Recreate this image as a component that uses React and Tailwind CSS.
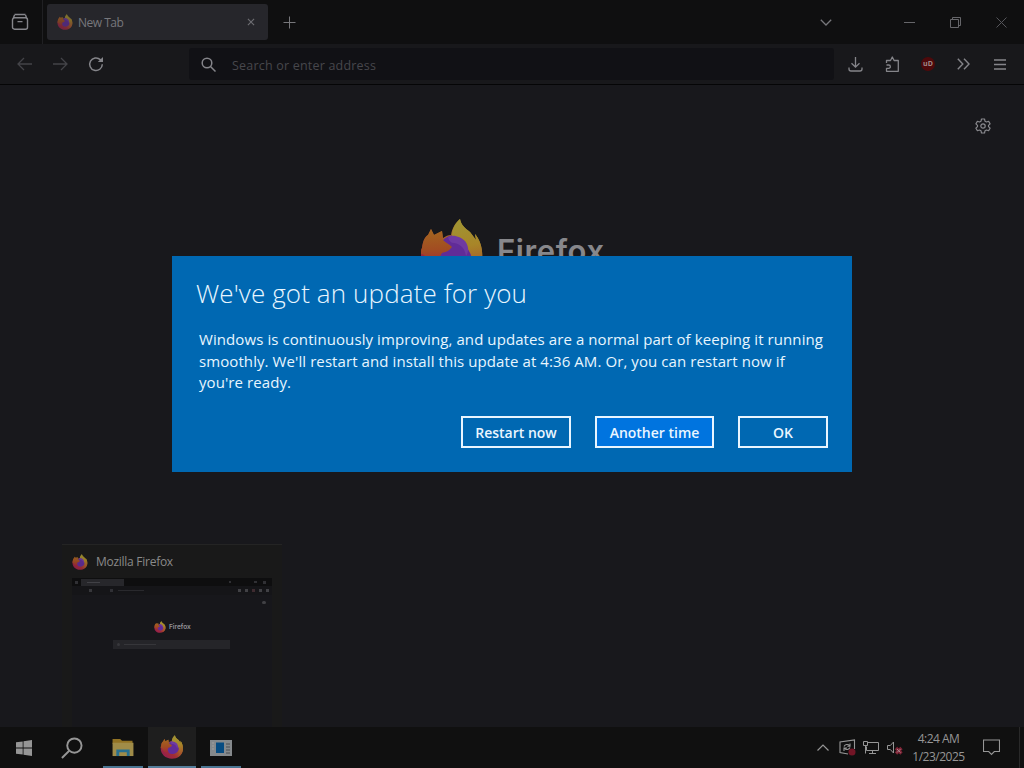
import React from "react";

function FirefoxIcon({ id, className }) {
  return (
    <svg viewBox="0 0 64 66" className={className} fill="none">
      <defs>
        <linearGradient id={`${id}-body`} x1="54" y1="8" x2="10" y2="60" gradientUnits="userSpaceOnUse">
          <stop offset="0" stopColor="#a08c2c" />
          <stop offset="0.4" stopColor="#a5602a" />
          <stop offset="0.7" stopColor="#a02c36" />
          <stop offset="1" stopColor="#951d4f" />
        </linearGradient>
        <linearGradient id={`${id}-flame`} x1="42" y1="0" x2="52" y2="56" gradientUnits="userSpaceOnUse">
          <stop offset="0" stopColor="#9f9634" />
          <stop offset="0.5" stopColor="#a88528" />
          <stop offset="1" stopColor="#a54c2c" />
        </linearGradient>
        <linearGradient id={`${id}-head`} x1="12" y1="14" x2="14" y2="50" gradientUnits="userSpaceOnUse">
          <stop offset="0" stopColor="#a3631f" />
          <stop offset="0.5" stopColor="#a24c22" />
          <stop offset="1" stopColor="#a0243c" />
        </linearGradient>
      </defs>
      <path
        d="M2 30C3 22 5 19 8 17l3-6 3 6 8-4 1 7c3-2 5-3 8-3C32 10 36 4 40 1c1 6 5 9 10 13l6 8-1-6c6 7 8 17 7 25C60 56 47 65 32 65 14 65 1 52 1 37c0-3 0-5 1-7Z"
        fill={`url(#${id}-body)`}
      />
      <path d="M22 24c3-6 11-8 18-6 9 3 14 14 10 23-3 8-11 12-19 11-9-1-16-8-15-17 0-5 2-8 6-11Z" fill="#612c98" />
      <path
        d="M40 1c1 6 5 9 10 13l6 8-1-6c6 7 8 17 7 25-1 8-7 15-14 19 5-7 6-16 3-23-3-7-6-10-10-15-3-3-6-3-9-4 0-8 4-13 8-17Z"
        fill={`url(#${id}-flame)`}
      />
      <path
        d="M2 30C3 22 5 19 8 17l3-6 3 6 8-4 1 9c3 3 6 4 9 7-3 4-6 5-10 6-3 4-2 10 2 13-8 3-17-2-19-10-2-2-3-2-4-2 0-3 0-5 1-6Z"
        fill={`url(#${id}-head)`}
      />
      <path d="M28 19c5-3 13 0 17 4 4 5 4 11 1 15-1-7-5-12-12-13-3 0-5-2-6-6Z" fill="#6f3aa2" />
    </svg>
  );
}

function TabStrip() {
  return (
    <div className="flex h-11 bg-[#0f0f10] text-[#85858a]">
      <div className="flex w-[43px] items-center justify-center border-r border-[#202023]">
        <svg className="ml-[-2px] h-[18px] w-[18px]" viewBox="0 0 18 18" fill="none" stroke="currentColor" strokeWidth="1.4">
          <path d="M3.5 1.5h11M3.5 4.8h11a2 2 0 0 1 2 2v7.400a2 2 0 0 1-2 2h-11a2 2 0 0 1-2-2V6.800a2 2 0 0 1 2-2ZM6.500 8.600h5M2 6l1.500-4M16 6l-1.500-4" />
        </svg>
      </div>
      <div className="mt-1 ml-[4px] flex h-9 w-[221px] items-center rounded-[3px] bg-[#26262b] pr-[13px] pl-[10px]">
        <FirefoxIcon id="tab" className="h-4 w-4 opacity-70" />
        <span className="mt-[2px] ml-[5px] flex-1 text-[12px] tracking-[-0.500px] text-[#77777c]">New Tab</span>
        <svg className="h-2 w-2" viewBox="0 0 9 9" stroke="#6f6f74" strokeWidth="1.200">
          <path d="m1 1 7 7M8 1 1 8" />
        </svg>
      </div>
      <svg className="mt-[16px] ml-[15px] h-[13px] w-[13px]" viewBox="0 0 13 13" stroke="#77777b">
        <path d="M6.500.5v12M.5 6.500h12" />
      </svg>
      <div className="mr-[17px] ml-auto flex items-center">
        <svg className="mr-[72px] h-[7px] w-3" viewBox="0 0 12 7" fill="none" stroke="#77777b" strokeWidth="1.300">
          <path d="m.8.8 5.200 5.200L11.200.8" />
        </svg>
        <svg className="mr-[35px] h-[11px] w-[11px]" viewBox="0 0 11 11" stroke="#66666a">
          <path d="M0 5.500h11" />
        </svg>
        <svg className="mr-[35px] h-[11px] w-[11px]" viewBox="0 0 11 11" fill="none" stroke="#66666a">
          <path d="M.5 2.500h8v8h-8zM2.500 2V.5h8v8H9" />
        </svg>
        <svg className="h-[11px] w-[11px]" viewBox="0 0 11 11" stroke="#55555a">
          <path d="m.5.5 10 10M10.500.5l-10 10" />
        </svg>
      </div>
    </div>
  );
}

function NavBar() {
  return (
    <div className="flex h-[41px] items-center border-b border-[#050506] bg-[#18181b] text-[#85858a]">
      <svg className="ml-[17px] h-[14px] w-[15px] text-[#434348]" viewBox="0 0 15 14" fill="none" stroke="currentColor" strokeWidth="1.300">
        <path d="M7 1 1 7l6 6M1 7h14" />
      </svg>
      <svg className="ml-[21px] h-[14px] w-[15px] text-[#434348]" viewBox="0 0 15 14" fill="none" stroke="currentColor" strokeWidth="1.300">
        <path d="m8 1 6 6-6 6M14 7H0" />
      </svg>
      <svg className="ml-[20px] h-4 w-4" viewBox="0 0 16 16" fill="none" stroke="currentColor" strokeWidth="1.500">
        <path d="M14.300 8.300A6.300 6.300 0 1 1 12.300 3.600l1.500 1.400" />
        <path d="M15 .9v5.200H9.800Z" fill="currentColor" stroke="none" />
      </svg>
      <div className="ml-[85px] flex h-8 w-[645px] items-center rounded-[3px] bg-[#111115] pl-3">
        <svg className="h-[15px] w-[15px]" viewBox="0 0 15 15" fill="none" stroke="currentColor" strokeWidth="1.500">
          <circle cx="6" cy="6" r="4.800" />
          <path d="m9.500 9.500 5 5" />
        </svg>
        <span className="mt-[4px] ml-[16px] text-[12.500px] tracking-[0.200px] text-[#47474c]">Search or enter address</span>
      </div>
      <svg className="ml-[14px] h-[15px] w-[15px]" viewBox="0 0 15 15" fill="none" stroke="currentColor" strokeWidth="1.300">
        <path d="M7.500 0v10M3.500 6.200l4 4 4-4M1 10.500V12a2 2 0 0 0 2 2h9a2 2 0 0 0 2-2v-1.500" />
      </svg>
      <svg className="ml-[22px] h-4 w-[15px]" viewBox="0 0 15 16" fill="none" stroke="currentColor" strokeWidth="1.300" strokeLinejoin="round">
        <path d="M1.500 7V4.500h4L7.300 1l1.800 3.500h4.200v10.800H1.500v-3h2.200a1.600 1.600 0 0 0 0-3.300H1.500" />
      </svg>
      <div className="ml-[21px] flex h-[14px] w-[14px] items-center justify-center rounded-full bg-[#4e090b] text-[7px] font-bold text-[#a0898a]">
        <span>uD</span>
      </div>
      <svg className="ml-[22px] h-3 w-[13px]" viewBox="0 0 13 12" fill="none" stroke="currentColor" strokeWidth="1.400">
        <path d="m.8.8 5 5.200-5 5.200M7 .8 12 6l-5 5.200" />
      </svg>
      <svg className="ml-[24px] h-[11px] w-[12px]" viewBox="0 0 12 11" stroke="currentColor" strokeWidth="1.300">
        <path d="M0 1h12M0 5.500h12M0 10h12" />
      </svg>
    </div>
  );
}

function NewTabPage() {
  return (
    <div className="flex flex-1 flex-col bg-[#18181c]">
      <svg
        className="mt-[33px] mr-[33px] h-4 w-4 self-end"
        viewBox="0 0 16 16"
        fill="none"
        stroke="#88888d"
        strokeWidth="1.200"
        strokeLinejoin="round"
      >
        <path d="M6.500 1h3l.5 2.200 1.500.8 2.100-.7 1.500 2.600L13.500 7.400v1.200l1.600 1.500-1.500 2.600-2.100-.7-1.500.8-.5 2.200h-3L6 12.800 4.500 12l-2.100.7L.9 10.100l1.600-1.500V7.400L.9 5.900l1.500-2.600 2.100.7L6 3.200Z" />
        <circle cx="8" cy="8" r="2.200" />
      </svg>
      <div className="mt-[84px] ml-[420px] flex">
        <FirefoxIcon id="logo" className="h-[66px] w-16" />
        <span className="mt-[11px] ml-[13px] font-['Inter','Open_Sans',sans-serif] text-[31px] leading-[44px] font-semibold tracking-[0.600px] text-[#87878b]">
          Firefox
        </span>
      </div>
    </div>
  );
}

function WindowPreview() {
  return (
    <div className="absolute bottom-[41px] left-[62px] flex h-[183px] w-[220px] flex-col border-t border-[#242424] bg-[#191919] px-[10px]">
      <div className="flex h-[33px] items-center">
        <FirefoxIcon id="preview" className="h-4 w-4 opacity-90" />
        <span className="mt-px ml-2 text-[12px] tracking-[-0.270px] text-[#8a8a8a]">Mozilla Firefox</span>
      </div>
      <div className="flex flex-1 flex-col bg-[#17171b]">
        <div className="flex h-2 items-center bg-[#0e0e0f]">
          <span className="ml-[3px] h-[3px] w-[3px] bg-[#303034]" />
          <span className="ml-[3px] h-[7px] w-[43px] bg-[#27272b] pt-[3px] pl-[6px]">
            <span className="block h-px w-[13px] bg-[#414146]" />
          </span>
          <span className="ml-auto h-[2px] w-[2px] bg-[#303034]" />
          <span className="ml-[23px] h-[2px] w-[3px] bg-[#303034]" />
          <span className="mx-[6px] h-[3px] w-[3px] bg-[#303034]" />
        </div>
        <div className="flex h-[9px] items-center bg-[#151518]">
          <span className="ml-[17px] h-[3px] w-[3px] bg-[#37373b]" />
          <span className="ml-[18px] h-[3px] w-[3px] bg-[#303035]" />
          <span className="ml-[5px] h-px w-[26px] bg-[#29292d]" />
          <div className="mr-[3px] ml-auto flex gap-1">
            <span className="h-[3px] w-[3px] bg-[#414145]" />
            <span className="h-[3px] w-[3px] bg-[#414145]" />
            <span className="h-[3px] w-[3px] bg-[#3f2b30]" />
            <span className="h-[3px] w-[3px] bg-[#414145]" />
            <span className="h-[3px] w-[3px] bg-[#414145]" />
          </div>
        </div>
        <span className="mt-[6px] mr-[6px] h-[3px] w-[4px] self-end rounded-full bg-[#414145]" />
        <div className="mt-[17px] ml-[82px] flex items-center">
          <FirefoxIcon id="thumb" className="h-3 w-3" />
          <span className="ml-[3px] font-['Inter','Open_Sans',sans-serif] text-[6.500px] leading-3 font-semibold text-[#949499]">Firefox</span>
        </div>
        <div className="mt-[7px] ml-[41px] flex h-[9px] w-[117px] items-center bg-[#252529] pl-[4px]">
          <span className="h-[3px] w-[3px] rounded-full bg-[#38383c]" />
          <span className="ml-[4px] h-px w-[32px] bg-[#36363a]" />
        </div>
      </div>
    </div>
  );
}

function Taskbar() {
  return (
    <div className="flex h-[41px] bg-[#101010] text-[#969696]">
      <div className="flex w-12 items-center justify-center">
        <svg className="h-4 w-4" viewBox="0 0 16 16" fill="currentColor">
          <path d="M0 2.300 6.700 1.400v6.100H0ZM7.500 1.200 16 0v7.500H7.500ZM0 8.400h6.700v6.200L0 13.700ZM7.500 8.400H16V16l-8.500-1.200Z" />
        </svg>
      </div>
      <div className="flex w-12 items-center justify-center">
        <svg className="h-[22px] w-[22px]" viewBox="0 0 23 23" fill="none" stroke="currentColor" strokeWidth="2">
          <circle cx="14" cy="9" r="7.500" />
          <path d="M8.600 14.400 1 22" />
        </svg>
      </div>
      <div className="ml-[7px] flex w-10 flex-col items-center justify-end border-b-2 border-[#4a7592]">
        <svg className="mb-[9px] h-[19px] w-[22px]" viewBox="0 0 22 20">
          <path d="M0 1h8l2 2h11v3H0Z" fill="#927324" />
          <path d="M0 5h22v14H0Z" fill="#a08c48" />
          <path d="M4 19v-7h14v7h-3v-4H7v4Z" fill="#28708f" />
        </svg>
      </div>
      <div className="ml-[5px] flex w-12 flex-col items-center justify-end border-b-2 border-[#557e9b] bg-[#1e1e1e]">
        <FirefoxIcon id="task" className="mb-[7px] h-6 w-6" />
      </div>
      <div className="ml-[5px] flex w-10 flex-col items-center justify-end border-b-2 border-[#4a7592]">
        <svg className="mb-[10px] h-4 w-[22px]" viewBox="0 0 22 16">
          <path d="M0 0h22v16H0Z" fill="#85898c" />
          <path d="M6 2.500h8V13H6Z" fill="#074c82" />
          <path d="M2 3h2M2 6h2M2 9h2" stroke="#a0a0a0" />
          <path d="M16 4h4M16 7h4M16 10h4M16 13h4" stroke="#4a4f53" />
        </svg>
      </div>
      <div className="ml-auto flex items-center">
        <svg className="h-[7px] w-3" viewBox="0 0 12 7" fill="none" stroke="currentColor" strokeWidth="1.200">
          <path d="M.5 6.500 6 1l5.500 5.500" />
        </svg>
        <svg className="ml-[10px] h-[17px] w-[17px]" viewBox="0 0 17 17" fill="none" stroke="currentColor" strokeWidth="1.100">
          <path d="M15.500 10V1L1 3v10.500l8 1.500" />
          <path d="M5 7.500c1-2 4-3 5.500-.8M11 4.500v2.800H8.300M11 8.500c-.8 2.200-4 2.800-5.500.7M5 12V9h3" />
          <circle cx="13" cy="13" r="3.500" fill="#731526" stroke="none" />
        </svg>
        <svg className="ml-[7px] h-[15px] w-4" viewBox="0 0 16 15" fill="none" stroke="currentColor">
          <path d="M4.500 2.500h11v8H3.500v-4M.5 1.500h4v4h-4zM2.500 5.500v8M9.500 10.500v3M6 13.500h7" />
        </svg>
        <svg className="ml-[8px] h-[15px] w-[16px]" viewBox="0 0 16 15" fill="none">
          <path d="M.5 5.500h2.800L6.500 2v11L3.300 9.500H.5Z" stroke="currentColor" />
          <path d="m9 8 5.500 5.500M14.500 8 9 13.500" stroke="#7f2436" strokeWidth="3.200" />
          <path d="m10 9 3.500 3.500M13.500 9 10 12.500" stroke="#a5838a" />
        </svg>
        <div className="ml-[7px] flex w-[57px] flex-col items-center text-[12px] leading-[18px] tracking-[-0.500px] whitespace-nowrap">
          <span>4:24 AM</span>
          <span>1/23/2025</span>
        </div>
        <svg className="ml-4 h-[17px] w-[17px]" viewBox="0 0 17 17" fill="none" stroke="currentColor" strokeWidth="1.100">
          <path d="M.5 1h16v11.500h-5.200L8.500 15.500l-2.800-3H.5Z" />
        </svg>
        <div className="mr-[4px] ml-[19px] h-[41px] w-px bg-[#292929]" />
      </div>
    </div>
  );
}

function UpdateDialog() {
  const button =
    "flex h-8 items-center justify-center border-2 border-[#e8f5ff] text-[14px] font-semibold whitespace-nowrap text-[#eaf6ff]";
  return (
    <div className="absolute top-64 left-[172px] flex h-[216px] w-[680px] flex-col bg-[#0068b2] text-[#e8f6ff]">
      <h1 className="mt-[19px] ml-6 text-[26px] leading-9 font-[350] tracking-[0.120px]">We've got an update for you</h1>
      <p className="mt-[18px] ml-[27px] text-[15px] leading-[21.500px] tracking-[0.085px] whitespace-nowrap">
        Windows is continuously improving, and updates are a normal part of keeping it running
        <br />
        smoothly. We'll restart and install this update at 4:36 AM. Or, you can restart now if
        <br />
        you're ready.
      </p>
      <div className="mt-auto mr-6 mb-6 flex justify-end gap-6">
        <button className={`${button} w-[110px]`}>Restart now</button>
        <button className={`${button} w-[119px] bg-[#0074df]`}>Another time</button>
        <button className={`${button} w-[90px]`}>OK</button>
      </div>
    </div>
  );
}

export default function App() {
  return (
    <div className="relative flex h-[768px] w-[1024px] flex-col overflow-hidden bg-[#18181c] font-['Open_Sans','Noto_Sans',sans-serif]">
      <TabStrip />
      <NavBar />
      <NewTabPage />
      <Taskbar />
      <WindowPreview />
      <UpdateDialog />
    </div>
  );
}
